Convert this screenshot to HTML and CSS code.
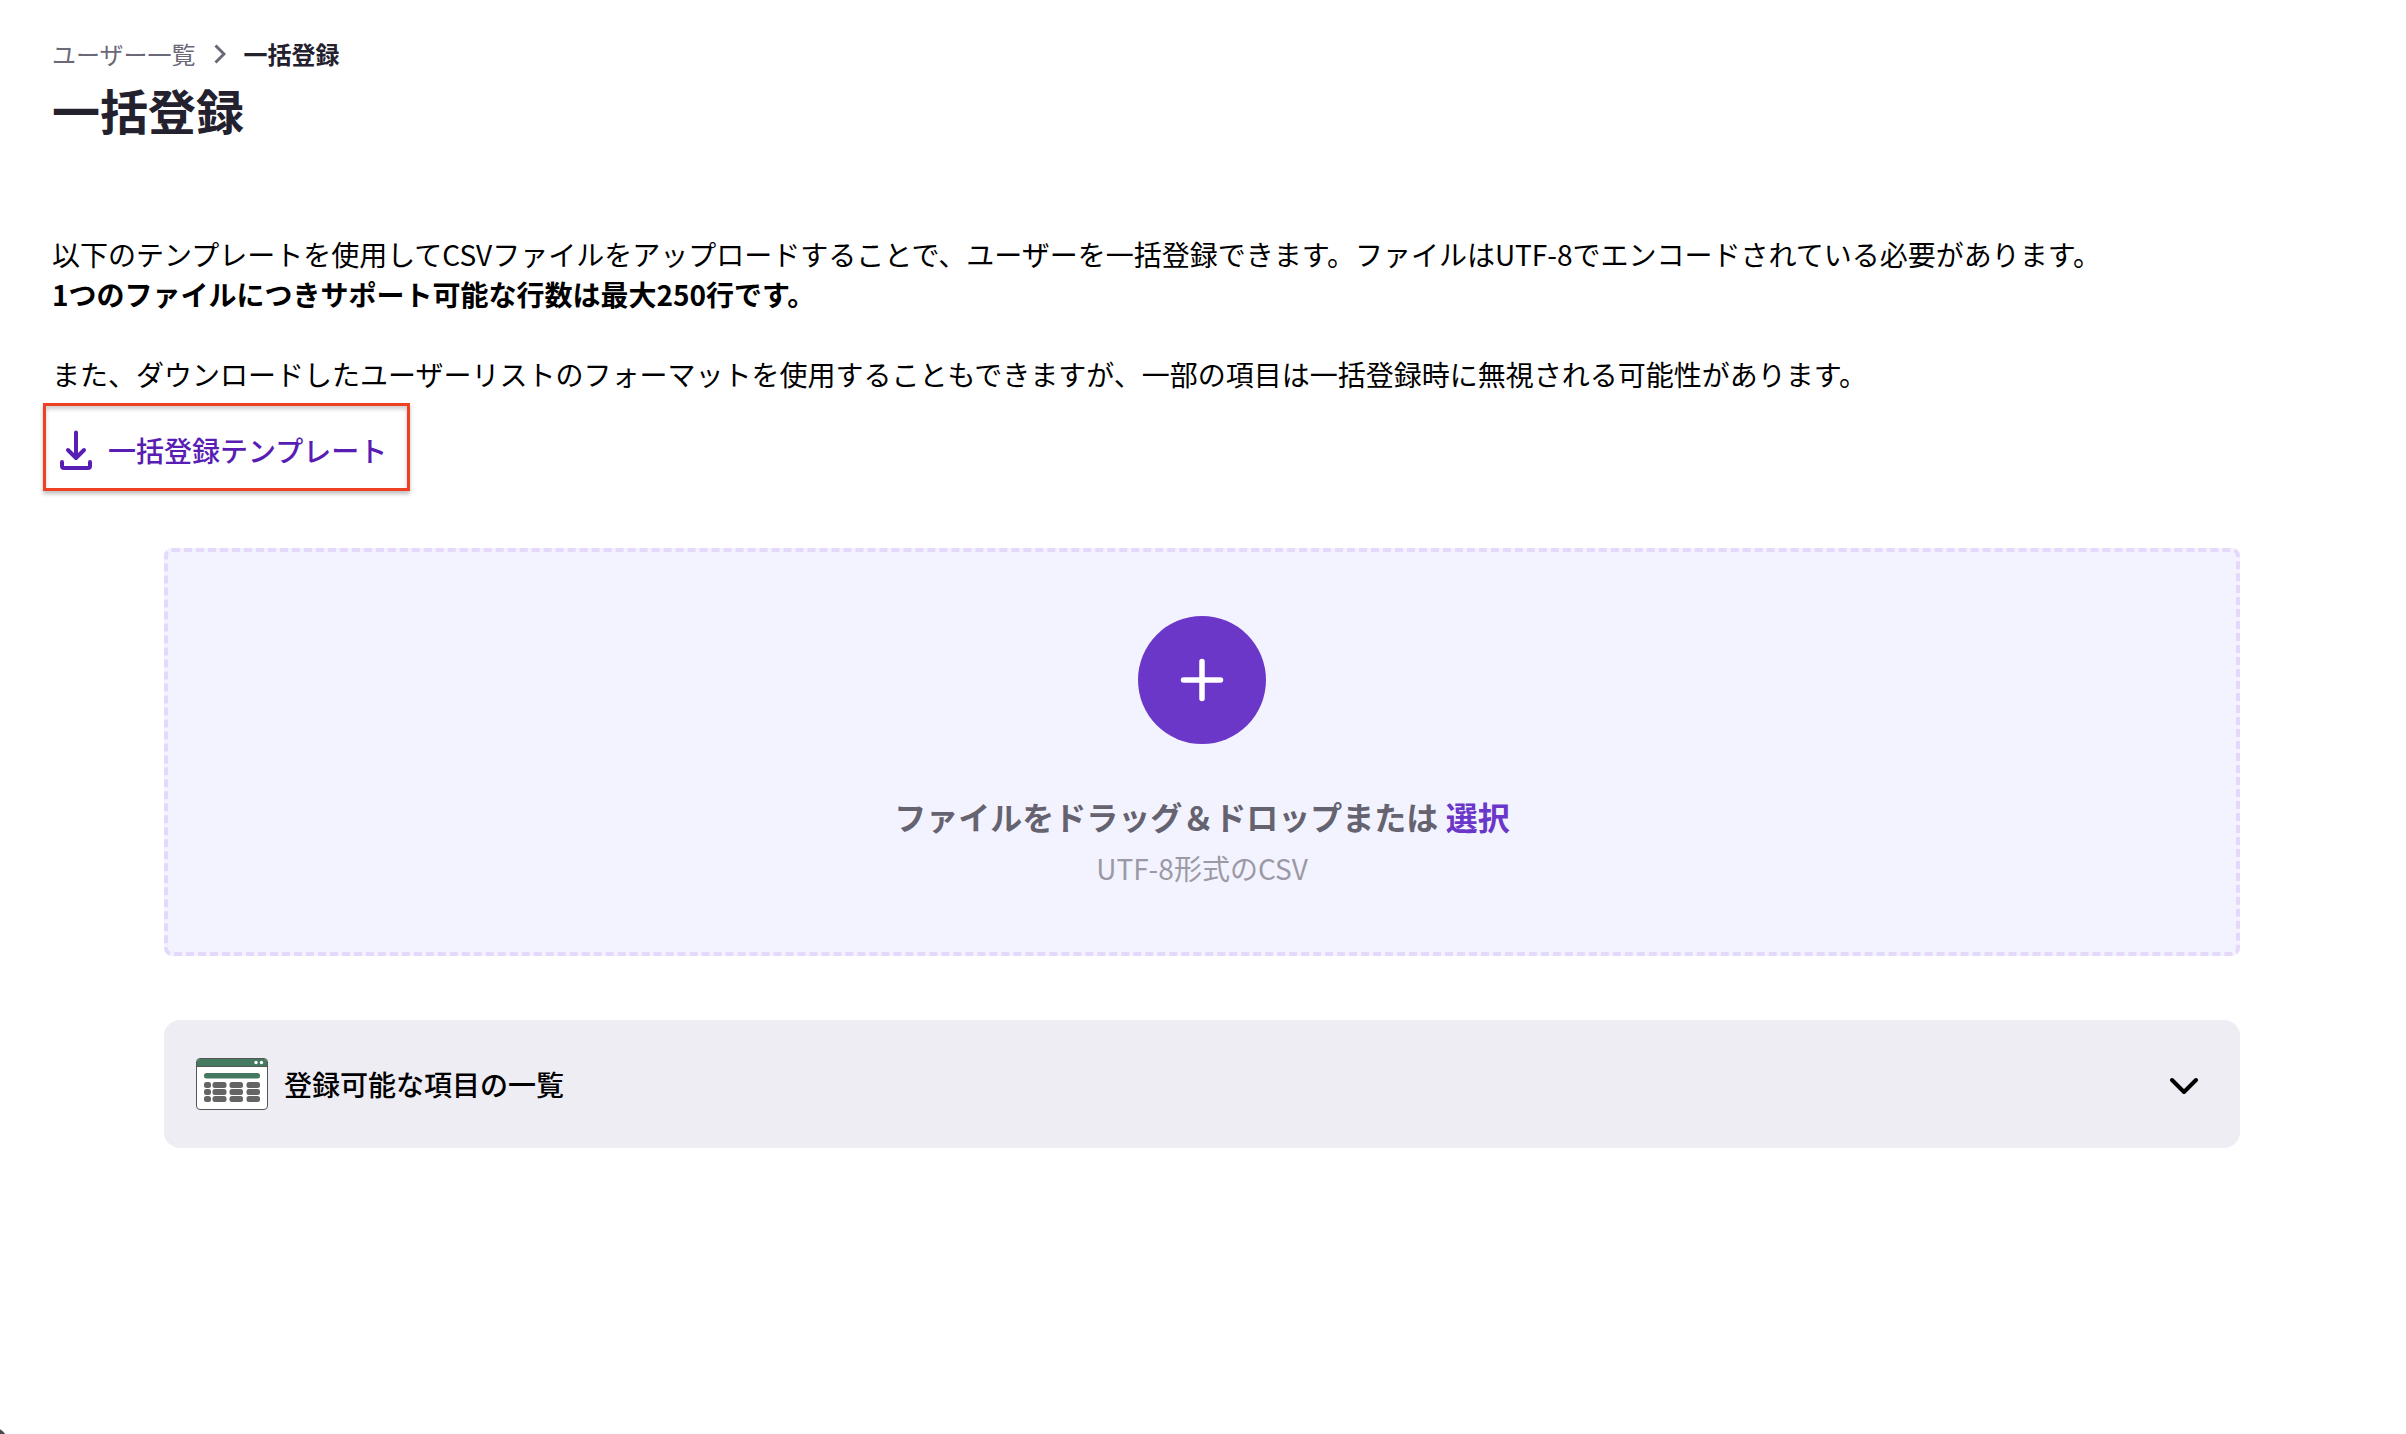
FILE: index.html
```
<!DOCTYPE html>
<html lang="ja">
<head>
  <meta charset="UTF-8" />
  <meta name="viewport" content="width=device-width, initial-scale=1" />
  <title>一括登録</title>
  <link rel="stylesheet" href="styles.css">
</head>
<body>
  <main class="page">
    <header>
      <nav class="breadcrumb">
        <a href="#">ユーザー一覧</a>
        <svg width="12" height="20" viewBox="0 0 12 20" fill="none" stroke="currentColor" stroke-width="3"><path d="M1.5 1.5 10 10l-8.5 8.5" /></svg>
        <strong>一括登録</strong>
      </nav>
      <h1>一括登録</h1>
    </header>

    <section class="description">
      <p>以下のテンプレートを使用してCSVファイルをアップロードすることで、ユーザーを一括登録できます。ファイルはUTF-8でエンコードされている必要があります。<br><strong>1つのファイルにつきサポート可能な行数は最大250行です。</strong></p>
      <p>また、ダウンロードしたユーザーリストのフォーマットを使用することもできますが、一部の項目は一括登録時に無視される可能性があります。</p>
    </section>

    <a class="template-link" href="#">
      <svg width="32" height="40" viewBox="0 0 32 40" fill="none" stroke="currentColor" stroke-width="4" stroke-linecap="round" stroke-linejoin="round">
        <path d="M16 2.5V27M8 20l8 8 8-8M2 32v4a2 2 0 0 0 2 2h24a2 2 0 0 0 2-2v-4" />
      </svg>
      一括登録テンプレート
    </a>

    <div class="content">
      <section class="dropzone">
        <button class="add-button" type="button" aria-label="ファイルを追加">
          <svg width="44" height="44" viewBox="0 0 44 44" fill="none" stroke="currentColor" stroke-width="5.5" stroke-linecap="round"><path d="M22 3.5v37M3.5 22h37" /></svg>
        </button>
        <p class="drop-title">ファイルをドラッグ＆ドロップまたは <button class="select-button" type="button">選択</button></p>
        <p class="drop-note">UTF-8形式のCSV</p>
      </section>

      <button class="accordion" type="button" aria-expanded="false">
        <svg width="72" height="52" viewBox="0 0 72 52">
          <rect x=".5" y=".5" width="71" height="51" rx="3.5" fill="#fff" stroke="#555" />
          <path d="M1 8.5V4a3 3 0 0 1 3-3h64a3 3 0 0 1 3 3v4.500z" fill="#447a60" />
          <path d="M.5 8.5h71" stroke="#555" />
          <circle cx="60" cy="4.500" r="1.7" fill="#fff" />
          <circle cx="65.500" cy="4.500" r="1.7" fill="#fff" />
          <rect x="8" y="15" width="56" height="5.5" rx="2.5" fill="#447a60" />
          <g fill="#646464">
            <rect x="8" y="24" width="7" height="6" rx="2.5" />
            <rect x="16.500" y="24" width="14" height="6" rx="2.5" />
            <rect x="33.500" y="24" width="13.5" height="6" rx="2.5" />
            <rect x="50.500" y="24" width="13.5" height="6" rx="2.5" />
            <rect x="8" y="31" width="7" height="6" rx="2.5" />
            <rect x="16.500" y="31" width="14" height="6" rx="2.5" />
            <rect x="33.500" y="31" width="13.5" height="6" rx="2.5" />
            <rect x="50.500" y="31" width="13.5" height="6" rx="2.5" />
            <rect x="8" y="38" width="7" height="6" rx="2.5" />
            <rect x="16.500" y="38" width="14" height="6" rx="2.5" />
            <rect x="33.500" y="38" width="13.5" height="6" rx="2.5" />
            <rect x="50.500" y="38" width="13.5" height="6" rx="2.5" />
          </g>
        </svg>
        <span>登録可能な項目の一覧</span>
        <svg class="chevron" width="28" height="20" viewBox="0 0 28 20" fill="none" stroke="currentColor" stroke-width="4" stroke-linecap="round" stroke-linejoin="round"><path d="m2 6 12 12L26 6" /></svg>
      </button>
    </div>
  </main>
  <div class="corner-badge"></div>
</body>
</html>
```
FILE: styles.css
```
* {
  box-sizing: border-box;
}
body {
  margin: 0;
  background: #fff;
  color: #000;
  font-family: "Noto Sans CJK JP", sans-serif;
  font-size: 28px;
  line-height: 40px;
}
h1, p {
  margin: 0;
}
svg {
  display: block;
  flex-shrink: 0;
}
button {
  font: inherit;
  border: 0;
  padding: 0;
  cursor: pointer;
}
.page {
  padding: 36px 54px 40px 52px;
}
.breadcrumb {
  display: flex;
  align-items: center;
  gap: 18px;
  height: 36px;
  font-size: 24px;
  color: #6b6877;
}
.breadcrumb a {
  color: inherit;
  text-decoration: none;
}
.breadcrumb strong {
  color: #24212f;
}
h1 {
  font-size: 48px;
  line-height: 74px;
  color: #24212f;
}
.description {
  margin-top: 88px;
}
.description p + p {
  margin-top: 40px;
}
.template-link {
  display: flex;
  align-items: center;
  gap: 16px;
  width: fit-content;
  height: 88px;
  margin: 9px 0 0 -9px;
  padding: 6px 20px 0 14px;
  border: 3px solid #ee4123;
  box-shadow: 0 3px 4px rgba(0,0,0,0.25), inset 0 3px 4px rgba(0,0,0,0.2);
  color: #581db3;
  font-weight: 500;
  text-decoration: none;
}
.content {
  margin: 57px 112px 0;
}
.dropzone {
  display: flex;
  flex-direction: column;
  align-items: center;
  padding: 64px 20px;
  border: 4px dashed #e4d9fa;
  border-radius: 8px;
  background: #f3f3ff;
  text-align: center;
}
.add-button {
  display: flex;
  align-items: center;
  justify-content: center;
  width: 128px;
  height: 128px;
  border-radius: 50%;
  background: #6a37c9;
  color: #fff;
}
.drop-title {
  margin-top: 48px;
  font-size: 32px;
  line-height: 48px;
  font-weight: bold;
  color: #666371;
}
.select-button {
  background: none;
  color: #6a37c9;
}
.drop-note {
  margin-top: 8px;
  color: #9b99a5;
}
.accordion {
  display: flex;
  align-items: center;
  gap: 16px;
  width: 100%;
  height: 128px;
  margin-top: 64px;
  padding: 0 42px 0 32px;
  border-radius: 16px;
  background: #eeedf3;
  color: #000;
  font-weight: 500;
  text-align: left;
}
.chevron {
  margin-left: auto;
}
.corner-badge {
  position: fixed;
  left: -24px;
  bottom: -25px;
  width: 32px;
  height: 32px;
  border-radius: 50%;
  background: #4a484d;
}
```
